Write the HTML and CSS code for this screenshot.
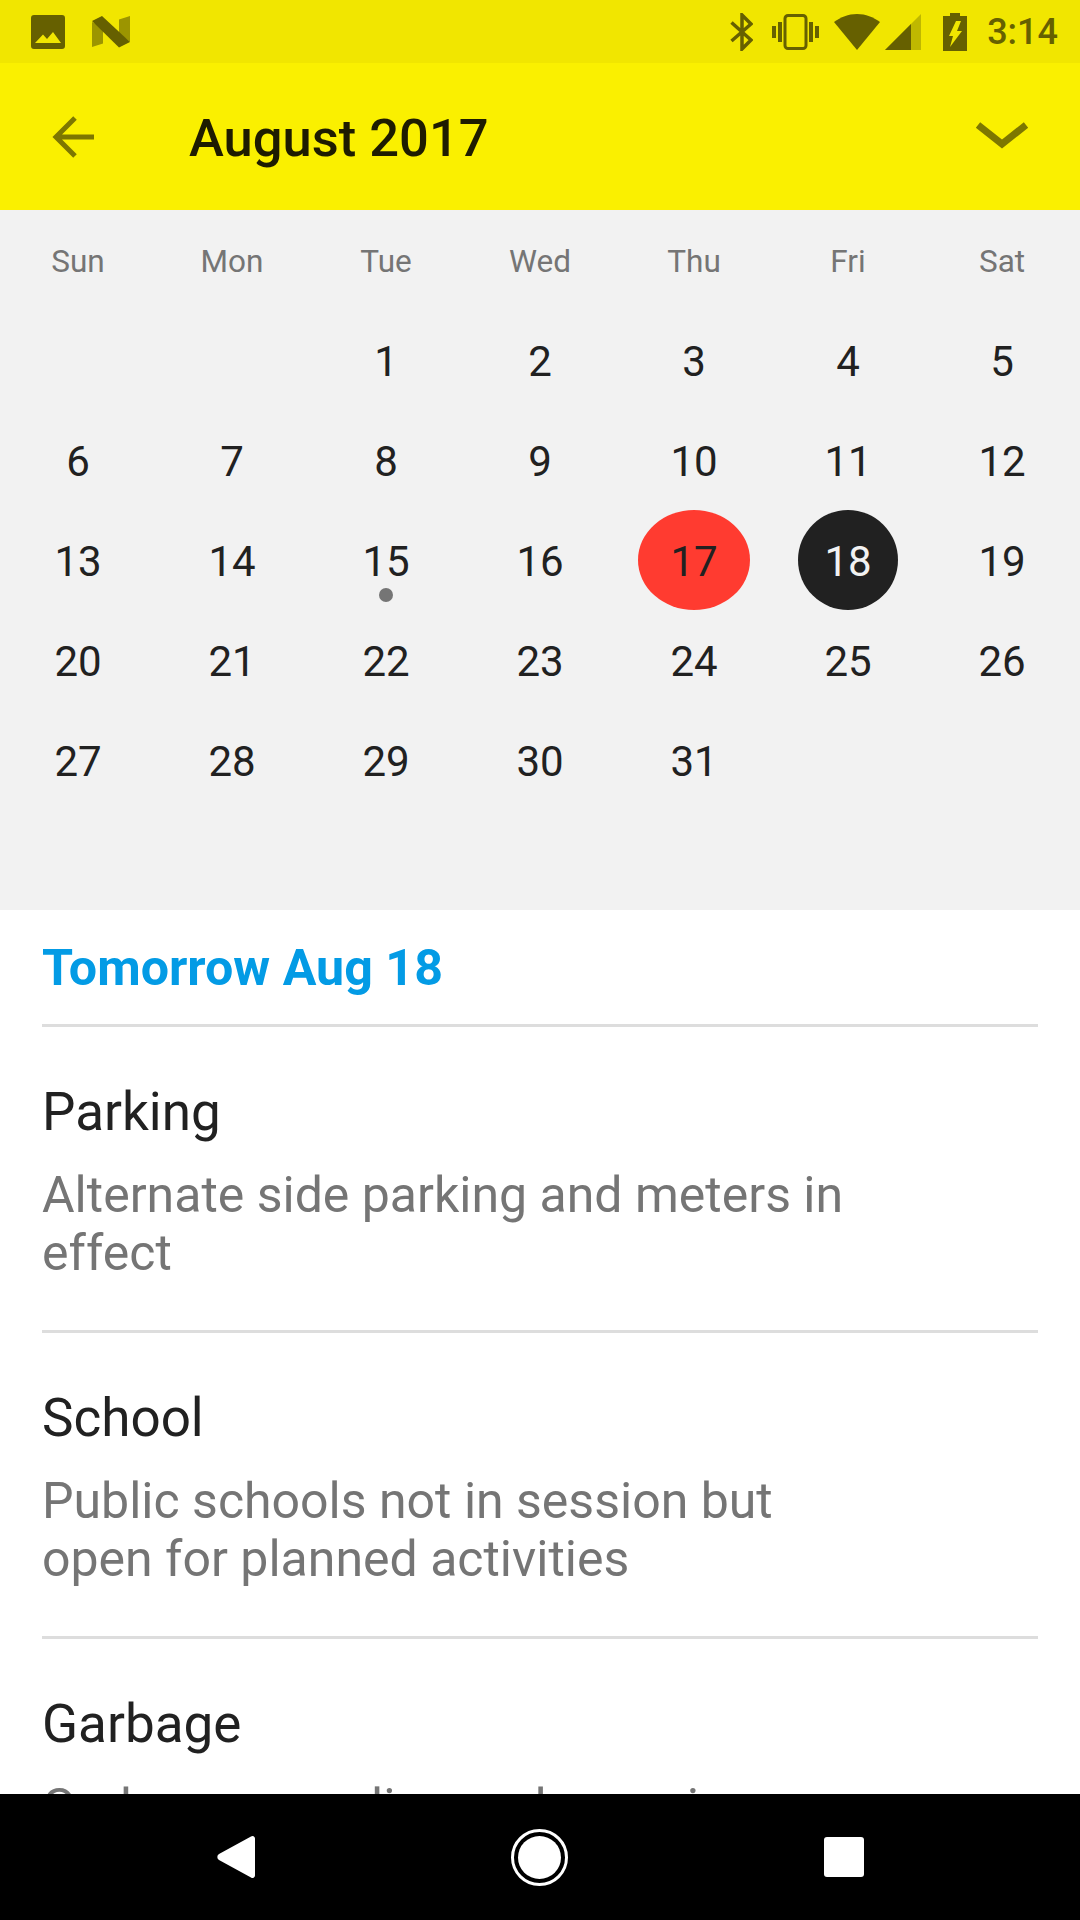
FILE: index.html
```html
<!doctype html>
<html lang="en">

<head>
    <meta charset="UTF-8">
    <title>August 2017</title>
    <link rel="stylesheet" href="styles.css">
</head>

<body>
    <div class="screen">
        <div class="statusbar">
            <div class="status-left">
                <svg class="ic-photo" width="34" height="34" viewBox="0 0 34 34">
                    <path fill-rule="evenodd" d="M3 0h28a3 3 0 0 1 3 3v28a3 3 0 0 1-3 3H3a3 3 0 0 1-3-3V3a3 3 0 0 1 3-3zM4 28h26l-8-11-6 7-4-4.500z" fill="#666000"/>
                </svg>
                <svg class="ic-n" width="38" height="32" viewBox="0 0 38 32">
                    <path d="M0 6v25l11-3.500V11z" fill="#9c9500"/>
                    <path d="M27 3.500 38 0v26l-11-9z" fill="#9c9500"/>
                    <path d="M0 5 10 0l28 26-11 5.500z" fill="#666000"/>
                </svg>
            </div>
            <div class="status-right">
                <svg class="ic-bt" width="23" height="38" viewBox="0 0 23 38">
                    <path d="M1.500 9.500 21 27 12 36V2l9 9L1.500 28" fill="none" stroke="#666000" stroke-width="3.500"/>
                </svg>
                <svg class="ic-vib" width="47" height="36" viewBox="0 0 47 36">
                    <path d="M0 12h4v12H0zM6 8h4v20H6zM37 8h4v20h-4zM43 12h4v12h-4z" fill="#666000"/>
                    <rect x="13" y="1.500" width="21" height="33" rx="3" fill="none" stroke="#666000" stroke-width="3"/>
                </svg>
                <svg class="ic-wifi" width="46" height="36" viewBox="0 0 46 36">
                    <path d="M23 36 0 8C7 3 14 0 23 0s16 3 23 8z" fill="#666000"/>
                </svg>
                <svg class="ic-signal" width="36" height="36" viewBox="0 0 36 36">
                    <path d="M0 36 36 0v36z" fill="#bfb800"/>
                    <path d="M0 36 26 10v26z" fill="#666000"/>
                </svg>
                <svg class="ic-batt" width="24" height="38" viewBox="0 0 24 38">
                    <path fill-rule="evenodd" d="M7 0h10v3h7v35H0V3h7zM13 8h5l-4 10h5L7 34l3-11H6z" fill="#666000"/>
                </svg>
                <span class="clock">3:14</span>
            </div>
        </div>

        <div class="appbar">
            <svg class="ic-back" width="44" height="42" viewBox="0 0 44 42">
                <path d="M42 21H4M23 2 4 21l19 19" fill="none" stroke="#7d7700" stroke-width="5"/>
            </svg>
            <div class="month">August 2017</div>
            <svg class="ic-chevron" width="54" height="30" viewBox="0 0 54 30">
                <path d="M3 3l24 19L51 3" fill="none" stroke="#7d7700" stroke-width="7"/>
            </svg>
        </div>

        <div class="calendar">
            <div class="week-head">
                <div>Sun</div><div>Mon</div><div>Tue</div><div>Wed</div><div>Thu</div><div>Fri</div><div>Sat</div>
            </div>
            <div class="days">
                <div></div><div></div>
                <div class="day">1</div><div class="day">2</div><div class="day">3</div><div class="day">4</div><div class="day">5</div>
                <div class="day">6</div><div class="day">7</div><div class="day">8</div><div class="day">9</div><div class="day">10</div><div class="day">11</div><div class="day">12</div>
                <div class="day">13</div><div class="day">14</div>
                <div class="day has-event">15</div>
                <div class="day">16</div>
                <div class="day today">17</div>
                <div class="day selected">18</div>
                <div class="day">19</div>
                <div class="day">20</div><div class="day">21</div><div class="day">22</div><div class="day">23</div><div class="day">24</div><div class="day">25</div><div class="day">26</div>
                <div class="day">27</div><div class="day">28</div><div class="day">29</div><div class="day">30</div><div class="day">31</div>
            </div>
        </div>

        <div class="detail">
            <div class="detail-date">Tomorrow Aug 18</div>
            <div class="item">
                <div class="item-title">Parking</div>
                <div class="item-text">Alternate side parking and meters in effect</div>
            </div>
            <div class="item">
                <div class="item-title">School</div>
                <div class="item-text">Public schools not in session but open for planned activities</div>
            </div>
            <div class="item">
                <div class="item-title">Garbage</div>
                <div class="item-text">Garbage, recycling and organics collection on schedule</div>
            </div>
        </div>

        <div class="navbar">
            <svg width="38" height="44" viewBox="0 0 38 44">
                <path d="M34 1.500 2 19a3.500 3.500 0 0 0 0 6l32 17.500a2.500 2.500 0 0 0 4-2V3.500a2.500 2.500 0 0 0-4-2z" fill="#fff"/>
            </svg>
            <svg width="57" height="57" viewBox="0 0 57 57">
                <circle cx="28.500" cy="28.500" r="27" fill="none" stroke="#fff" stroke-width="3"/>
                <circle cx="28.500" cy="28.500" r="21.500" fill="#fff"/>
            </svg>
            <svg width="40" height="40" viewBox="0 0 40 40">
                <rect width="40" height="40" rx="3" fill="#fff"/>
            </svg>
        </div>
    </div>
</body>

</html>
```

FILE: styles.css
```css
* {
    margin: 0;
    padding: 0;
    box-sizing: border-box;
}

body {
    font-family: Roboto, "Liberation Sans", sans-serif;
    color: #212121;
    background: #fff;
}

.screen {
    display: flex;
    flex-direction: column;
    width: 1080px;
    height: 1920px;
    overflow: hidden;
}

.statusbar {
    display: flex;
    flex: none;
    justify-content: space-between;
    align-items: center;
    height: 63px;
    padding: 0 22px 0 31px;
    background: #f1e600;
}

.status-left,
.status-right {
    display: flex;
    align-items: center;
}

.status-left {
    gap: 27px;
}

.status-right svg {
    flex: none;
}

.ic-vib {
    margin-left: 19px;
}

.ic-wifi {
    margin-left: 15px;
}

.ic-signal {
    margin-left: 5px;
}

.ic-batt {
    margin-left: 22px;
}

.clock {
    margin-left: 20px;
    font-size: 36px;
    font-weight: 500;
    color: #666000;
}

.appbar {
    display: flex;
    flex: none;
    align-items: center;
    height: 147px;
    padding: 0 51px 0 52px;
    background: #faf000;
}

.month {
    flex: 1;
    margin-left: 93px;
    padding-top: 3px;
    font-size: 52.500px;
    font-weight: 500;
    color: #1e1c00;
}

.calendar {
    flex: none;
    height: 700px;
    background: #f2f2f2;
}

.week-head,
.days {
    display: grid;
    grid-template-columns: repeat(7, 1fr);
    padding: 0 1px;
    text-align: center;
}

.week-head {
    height: 100px;
    padding-top: 33px;
    font-size: 31.500px;
    line-height: 37px;
    color: #757575;
}

.days {
    grid-auto-rows: 100px;
    font-size: 42px;
}

.day {
    position: relative;
    display: flex;
    justify-content: center;
    align-items: center;
    padding-top: 2px;
}

.today::before,
.selected::before {
    content: "";
    position: absolute;
    top: 0;
    left: 50%;
    height: 100px;
    border-radius: 50%;
    z-index: -1;
}

.today,
.selected {
    z-index: 0;
}

.today::before {
    width: 112px;
    margin-left: -56px;
    background: #ff3b30;
}

.selected {
    color: #f2f2f2;
}

.selected::before {
    width: 100px;
    margin-left: -50px;
    background: #212121;
}

.has-event::after {
    content: "";
    position: absolute;
    top: 78px;
    left: 50%;
    width: 14px;
    height: 14px;
    margin-left: -7px;
    border-radius: 50%;
    background: #757575;
}

.detail {
    flex: 1;
    min-height: 0;
    overflow: hidden;
    padding: 0 42px;
}

.detail-date {
    height: 117px;
    padding-top: 30px;
    font-size: 50.200px;
    font-weight: 700;
    line-height: 55px;
    color: #039be5;
    border-bottom: 3px solid #ddd;
}

.item {
    height: 306px;
    padding-top: 54px;
    border-bottom: 3px solid #ddd;
}

.item-title {
    font-size: 53px;
    line-height: 62px;
    color: #212121;
}

.item-text {
    width: 830px;
    margin-top: 24px;
    font-size: 50px;
    line-height: 57.500px;
    color: #757575;
}

.navbar {
    display: flex;
    flex: none;
    justify-content: center;
    align-items: center;
    gap: 256px;
    height: 126px;
    background: #000;
}
```
